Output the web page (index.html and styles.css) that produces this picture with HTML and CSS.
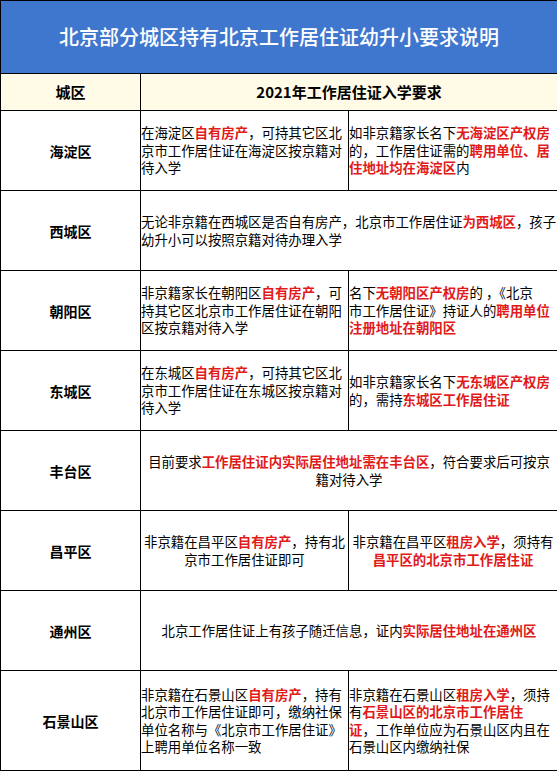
FILE: index.html
```html
<!DOCTYPE html>
<html lang="zh-CN">
<head>
<meta charset="utf-8">
<title>北京部分城区持有北京工作居住证幼升小要求说明</title>
<link rel="stylesheet" href="styles.css">
</head>
<body>
<table class="sheet">
  <colgroup>
    <col class="c1">
    <col class="c2">
    <col class="c3">
  </colgroup>
  <tr class="r-title">
    <td colspan="3" class="title"><span>北京部分城区持有北京工作居住证幼升小要求说明</span></td>
  </tr>
  <tr class="r-head">
    <th class="head">城区</th>
    <th class="head" colspan="2">2021年工作居住证入学要求</th>
  </tr>
  <tr class="r-row">
    <td class="district">海淀区</td>
    <td class="txt">在海淀区<b>自有房产</b>，可持其它区北<br>京市工作居住证在海淀区按京籍对<br>待入学</td>
    <td class="txt">如非京籍家长名下<b>无海淀区产权房</b><br>的，工作居住证需的<b>聘用单位、居</b><br><b>住地址均在海淀区</b>内</td>
  </tr>
  <tr class="r-row">
    <td class="district">西城区</td>
    <td class="txt" colspan="2">无论非京籍在西城区是否自有房产，北京市工作居住证<b>为西城区</b>，孩子<br>幼升小可以按照京籍对待办理入学</td>
  </tr>
  <tr class="r-row">
    <td class="district">朝阳区</td>
    <td class="txt">非京籍家长在朝阳区<b>自有房产</b>，可<br>持其它区北京市工作居住证在朝阳<br>区按京籍对待入学</td>
    <td class="txt">名下<b>无朝阳区产权房</b>的 ，《北京<br>市工作居住证》持证人的<b>聘用单位</b><br><b>注册地址在朝阳区</b></td>
  </tr>
  <tr class="r-row">
    <td class="district">东城区</td>
    <td class="txt">在东城区<b>自有房产</b>，可持其它区北<br>京市工作居住证在东城区按京籍对<br>待入学</td>
    <td class="txt">如非京籍家长名下<b>无东城区产权房</b><br>的，需持<b>东城区工作居住证</b></td>
  </tr>
  <tr class="r-row">
    <td class="district">丰台区</td>
    <td class="txt center" colspan="2">目前要求<b>工作居住证内实际居住地址需在丰台区</b>，符合要求后可按京<br>籍对待入学</td>
  </tr>
  <tr class="r-row">
    <td class="district">昌平区</td>
    <td class="txt center">非京籍在昌平区<b>自有房产</b>，持有北<br>京市工作居住证即可</td>
    <td class="txt center">非京籍在昌平区<b>租房入学</b>，须持有<br><b>昌平区的北京市工作居住证</b></td>
  </tr>
  <tr class="r-row">
    <td class="district">通州区</td>
    <td class="txt center" colspan="2">北京工作居住证上有孩子随迁信息，证内<b>实际居住地址在通州区</b></td>
  </tr>
  <tr class="r-last">
    <td class="district">石景山区</td>
    <td class="txt">非京籍在石景山区<b>自有房产</b>，持有<br>北京市工作居住证即可，缴纳社保<br>单位名称与《北京市工作居住证》<br>上聘用单位名称一致</td>
    <td class="txt">非京籍在石景山区<b>租房入学</b>，须持<br>有<b>石景山区的北京市工作居住</b><br><b>证</b>，工作单位应为石景山区内且在<br>石景山区内缴纳社保</td>
  </tr>
</table>
</body>
</html>
```

FILE: styles.css
```css
html, body {
  margin: 0;
  padding: 0;
  background: #ffffff;
}

body {
  font-family: "Noto Sans CJK SC", "Noto Sans", "Liberation Sans", sans-serif;
  color: #000000;
}

.sheet {
  width: 557px;
  border-collapse: collapse;
  table-layout: fixed;
}

.c1 { width: 140px; }
.c2 { width: 208px; }
.c3 { width: 209px; }

.sheet td,
.sheet th {
  border: 1px solid #000000;
  padding: 0;
}

.r-title { height: 73px; }
.r-head { height: 37px; }
.r-row { height: 80px; }
.r-last { height: 100px; }

.title {
  background: #3f77cf;
  color: #ffffff;
  text-align: center;
  font-size: 20px;
  font-weight: 500;
  line-height: 24px;
  padding-top: 8px;
  border-top-color: #3f77cf;
  border-left-color: #3f77cf;
  border-right-color: #3f77cf;
}

.head {
  background: #fffbe6;
  font-size: 15px;
  font-weight: 700;
  text-align: center;
  line-height: 20px;
}

.district {
  text-align: center;
  font-size: 14px;
  font-weight: 700;
  line-height: 18px;
}

.txt {
  font-size: 13.4px;
  line-height: 17.5px;
  text-align: left;
  white-space: nowrap;
  padding: 0 2px 0 3px;
}

.txt.center {
  text-align: center;
}

.txt b {
  color: #e11a1a;
  font-weight: 700;
}
```
